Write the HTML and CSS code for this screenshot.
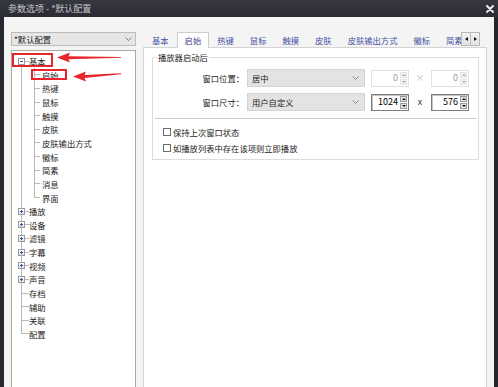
FILE: index.html
```html
<!DOCTYPE html>
<html lang="zh-CN">
<head>
<meta charset="utf-8">
<title>参数选项</title>
<link rel="stylesheet" href="styles.css">
</head>
<body>
<div class="win">
  <div class="titlebar">
    <span class="ttl">参数选项 - *默认配置</span>
    <svg class="close" width="8" height="8" viewBox="0 0 8 8"><path d="M1 1L7 7M7 1L1 7" stroke="#f2f2f2" stroke-width="1.8" stroke-linecap="round"/></svg>
  </div>
  <div class="body">
    <div class="left">
      <div class="combo main"><span>*默认配置</span><svg class="chev" width="7" height="4" viewBox="0 0 7 4"><polyline points="0.5,0.5 3.5,3.5 6.5,0.5" fill="none" stroke="#7a7a7a" stroke-width="1"/></svg></div>
      <div class="tree">
        <div class="node"><span class="g first"><span class="box"></span></span><span class="t">基本</span></div>
        <div class="node"><span class="g v"></span><span class="g2 tee"></span><span class="t">启始</span></div>
        <div class="node"><span class="g v"></span><span class="g2 tee"></span><span class="t">热键</span></div>
        <div class="node"><span class="g v"></span><span class="g2 tee"></span><span class="t">鼠标</span></div>
        <div class="node"><span class="g v"></span><span class="g2 tee"></span><span class="t">触摸</span></div>
        <div class="node"><span class="g v"></span><span class="g2 tee"></span><span class="t">皮肤</span></div>
        <div class="node"><span class="g v"></span><span class="g2 tee"></span><span class="t">皮肤输出方式</span></div>
        <div class="node"><span class="g v"></span><span class="g2 tee"></span><span class="t">徽标</span></div>
        <div class="node"><span class="g v"></span><span class="g2 tee"></span><span class="t">简素</span></div>
        <div class="node"><span class="g v"></span><span class="g2 tee"></span><span class="t">消息</span></div>
        <div class="node"><span class="g v"></span><span class="g2 last"></span><span class="t">界面</span></div>
        <div class="node"><span class="g tee"><span class="box plus"></span></span><span class="t">播放</span></div>
        <div class="node"><span class="g tee"><span class="box plus"></span></span><span class="t">设备</span></div>
        <div class="node"><span class="g tee"><span class="box plus"></span></span><span class="t">滤镜</span></div>
        <div class="node"><span class="g tee"><span class="box plus"></span></span><span class="t">字幕</span></div>
        <div class="node"><span class="g tee"><span class="box plus"></span></span><span class="t">视频</span></div>
        <div class="node"><span class="g tee"><span class="box plus"></span></span><span class="t">声音</span></div>
        <div class="node"><span class="g tee"></span><span class="t">存档</span></div>
        <div class="node"><span class="g tee"></span><span class="t">辅助</span></div>
        <div class="node"><span class="g tee"></span><span class="t">关联</span></div>
        <div class="node"><span class="g last"></span><span class="t">配置</span></div>
      </div>
    </div>
    <div class="right">
      <div class="tabbar">
        <div class="tabs">
          <span class="tab">基本</span>
          <span class="tab sel">启始</span>
          <span class="tab">热键</span>
          <span class="tab">鼠标</span>
          <span class="tab">触摸</span>
          <span class="tab">皮肤</span>
          <span class="tab">皮肤输出方式</span>
          <span class="tab">徽标</span>
          <span class="tab">简素</span>
        </div>
        <div class="scroll">
          <span class="sb"><i class="tri tl"></i></span>
          <span class="sb"><i class="tri tr"></i></span>
        </div>
      </div>
      <div class="panel">
        <fieldset class="grp">
          <legend>播放器启动后</legend>
          <div class="frow">
            <span class="lab">窗口位置：</span>
            <div class="combo f"><span>居中</span><svg class="chev" width="7" height="4" viewBox="0 0 7 4"><polyline points="0.5,0.5 3.5,3.5 6.5,0.5" fill="none" stroke="#8a8a8a" stroke-width="1"/></svg></div>
            <div class="spin dis first"><span class="val">0</span><span class="arr"><span class="ab"><i class="up"></i></span><span class="ab"><i class="dn"></i></span></span></div>
            <span class="times dis">×</span>
            <div class="spin dis"><span class="val">0</span><span class="arr"><span class="ab"><i class="up"></i></span><span class="ab"><i class="dn"></i></span></span></div>
          </div>
          <div class="frow">
            <span class="lab">窗口尺寸：</span>
            <div class="combo f"><span>用户自定义</span><svg class="chev" width="7" height="4" viewBox="0 0 7 4"><polyline points="0.5,0.5 3.5,3.5 6.5,0.5" fill="none" stroke="#8a8a8a" stroke-width="1"/></svg></div>
            <div class="spin en first"><span class="val">1024</span><span class="arr"><span class="ab"><i class="up"></i></span><span class="ab"><i class="dn"></i></span></span></div>
            <span class="times">x</span>
            <div class="spin en"><span class="val">576</span><span class="arr"><span class="ab"><i class="up"></i></span><span class="ab"><i class="dn"></i></span></span></div>
          </div>
          <div class="sep"></div>
          <label class="chk first"><span class="cb"></span>保持上次窗口状态</label>
          <label class="chk"><span class="cb"></span>如播放列表中存在该项则立即播放</label>
        </fieldset>
      </div>
    </div>
  </div>
  <svg class="annot" width="498" height="387" viewBox="0 0 498 387">
    <rect x="13" y="54" width="39" height="12" fill="none" stroke="#e6262b" stroke-width="2"/>
    <rect x="32" y="70" width="34" height="9" fill="none" stroke="#e6262b" stroke-width="2"/>
    <polygon points="57,57.5 70,52.5 68.5,56.2 121,57 121,57.8 68.5,59.2 70,62.5" fill="#e6262b"/>
    <polygon points="73,76.5 86,71.5 84.5,75 121,73.3 121,74.2 84.5,78 86,81.5" fill="#e6262b"/>
  </svg>
</div>
</body>
</html>
```

FILE: styles.css
```css
* { box-sizing: border-box; }
html, body { margin: 0; padding: 0; }
body {
  width: 498px;
  height: 387px;
  overflow: hidden;
  background: #25262e;
  font-family: "Noto Sans CJK SC", "Noto Sans", sans-serif;
  font-size: 8.3px;
  color: #222;
}
.win {
  position: relative;
  width: 498px;
  height: 387px;
  display: flex;
  flex-direction: column;
}
.titlebar {
  height: 17px;
  flex: none;
  display: flex;
  align-items: center;
  justify-content: space-between;
  padding: 0 4px 0 8px;
  background: linear-gradient(#363741, #2a2b33);
  color: #c4c4ca;
  font-size: 9px;
  line-height: 17px;
}
.close { display: block; }
.body {
  flex: 1;
  margin: 0 4px;
  background: #f4f4f4;
  display: flex;
  overflow: hidden;
}
.left {
  width: 132px;
  flex: none;
  padding: 15px 0 0 7px;
  display: flex;
  flex-direction: column;
  gap: 4px;
}
.combo {
  display: flex;
  align-items: center;
  justify-content: space-between;
  line-height: 12px;
}
.combo.main {
  height: 14px;
  flex: none;
  border: 1px solid #bcbcbc;
  background: #e6e6e6;
  padding: 0 3px 0 2px;
}
.chev { display: block; flex: none; }
.tree {
  height: 340px;
  flex: none;
  border: 1px solid #a9a9a9;
  background: #fff;
  padding: 3.3px 0 0 6px;
}
.node {
  height: 13.65px;
  display: flex;
  align-items: center;
  line-height: 12px;
}
.t { white-space: nowrap; color: #1e1e1e; }
.g, .g2 {
  height: 100%;
  flex: none;
  display: flex;
  align-items: center;
  background-repeat: no-repeat;
}
.g { width: 11px; }
.g2 { width: 13px; }
.g.v { background-image: linear-gradient(#b9b9b9, #b9b9b9); background-position: 3px 0; background-size: 1px 100%; }
.g.tee {
  background-image: linear-gradient(#b9b9b9, #b9b9b9), linear-gradient(#b9b9b9, #b9b9b9);
  background-position: 3px 0, 3px 50%;
  background-size: 1px 100%, 8px 1px;
}
.g.first {
  background-image: linear-gradient(#b9b9b9, #b9b9b9), linear-gradient(#b9b9b9, #b9b9b9);
  background-position: 3px 100%, 3px 50%;
  background-size: 1px 50%, 8px 1px;
}
.g.last {
  background-image: linear-gradient(#b9b9b9, #b9b9b9), linear-gradient(#b9b9b9, #b9b9b9);
  background-position: 3px 0, 3px 50%;
  background-size: 1px 50%, 8px 1px;
}
.g2.tee {
  background-image: linear-gradient(#b9b9b9, #b9b9b9), linear-gradient(#b9b9b9, #b9b9b9);
  background-position: 5px 0, 5px 50%;
  background-size: 1px 100%, 6px 1px;
}
.g2.last {
  background-image: linear-gradient(#b9b9b9, #b9b9b9), linear-gradient(#b9b9b9, #b9b9b9);
  background-position: 5px 0, 5px 50%;
  background-size: 1px 50%, 6px 1px;
}
.box {
  width: 7px;
  height: 7px;
  border: 1px solid #9a9a9a;
  background: linear-gradient(#3d5a96, #3d5a96) center / 3px 1px no-repeat, #fff;
}
.box.plus {
  background: linear-gradient(#3d5a96, #3d5a96) center / 3px 1px no-repeat,
              linear-gradient(#3d5a96, #3d5a96) center / 1px 3px no-repeat,
              linear-gradient(#ffffff, #d8e0ee);
}
.right {
  width: 344px;
  flex: none;
  margin-left: 7px;
  padding-top: 15px;
  display: flex;
  flex-direction: column;
}
.tabbar {
  display: flex;
  height: 16px;
  flex: none;
  margin-bottom: -1px;
}
.tabs {
  width: 318px;
  flex: none;
  display: flex;
  overflow: hidden;
  padding-left: 1px;
}
.tab {
  flex: none;
  height: 16px;
  padding: 0 7px;
  line-height: 14px;
  color: #4453a4;
  border: 1px solid transparent;
  border-bottom: none;
  white-space: nowrap;
}
.tab.sel {
  position: relative;
  z-index: 1;
  background: #fff;
  border-color: #cdcdcd;
  color: #38428c;
}
.scroll { display: flex; height: 14px; }
.sb {
  width: 10px;
  height: 14px;
  border: 1px solid #b9b9b9;
  background: linear-gradient(#f4f4f4, #e2e2e2);
  display: flex;
  align-items: center;
  justify-content: center;
}
.sb + .sb { margin-left: -1px; }
.tri { display: block; width: 0; height: 0; border-top: 2.5px solid transparent; border-bottom: 2.5px solid transparent; }
.tri.tl { border-right: 3px solid #111; }
.tri.tr { border-left: 3px solid #111; }
.panel {
  height: 345px;
  flex: none;
  border: 1px solid #d3d3d3;
  background: #fff;
  padding: 4px 8px 0 8px;
}
.grp {
  margin: 0;
  padding: 0 0 3px 0;
  width: 327px;
  min-width: 0;
  border: 1px solid #dcdcdc;
}
.grp legend {
  margin-left: 4px;
  padding: 0 1px;
  height: 10px;
  line-height: 10px;
  color: #222;
}
.frow {
  display: flex;
  align-items: center;
  height: 18px;
  margin-top: 7px;
}
.frow + .frow { margin-top: 6px; }
.lab {
  width: 91px;
  margin-right: 3px;
  text-align: right;
  white-space: nowrap;
  line-height: 12px;
}
.combo.f {
  width: 118px;
  height: 18px;
  flex: none;
  background: #e3e3e3;
  border: 1px solid #d4d4d4;
  padding: 0 5px 0 4px;
}
.spin {
  width: 38px;
  height: 17px;
  flex: none;
  display: flex;
  align-items: stretch;
  justify-content: flex-end;
  background: #fff;
  font-size: 9px;
}
.spin.first { margin-left: 6px; }
.spin.dis { border: 1px solid #e1e1e1; color: #9c9c9c; }
.spin.en { border: 1px solid #7c7c7c; box-shadow: inset 1px 1px 0 #c4c4c4; color: #000; }
.val { align-self: center; padding-right: 2px; line-height: 12px; }
.arr {
  width: 8px;
  display: flex;
  flex-direction: column;
  gap: 1px;
  padding: 1px 1px 1px 0;
}
.ab {
  flex: 1;
  display: flex;
  align-items: center;
  justify-content: center;
}
.spin.dis .ab { background: #f3f3f3; border: 1px solid #e4e4e4; }
.spin.en .ab { background: #e4e4e4; border: 1px solid #9a9a9a; }
.up, .dn { display: block; width: 0; height: 0; border-left: 2px solid transparent; border-right: 2px solid transparent; }
.up { border-bottom: 2px solid currentColor; }
.dn { border-top: 2px solid currentColor; }
.spin.dis .up, .spin.dis .dn { color: #a8a8a8; }
.spin.en .up, .spin.en .dn { color: #111; }
.times {
  width: 22px;
  flex: none;
  text-align: center;
  font-size: 9px;
  color: #333;
  line-height: 12px;
}
.times.dis { color: #c2c2c2; }
.sep {
  margin: 7px 2px 0;
  border-top: 1px solid #c9c9c9;
  border-bottom: 1px solid #fff;
}
.chk {
  display: flex;
  align-items: center;
  height: 16px;
  padding-left: 10px;
  line-height: 12px;
  white-space: nowrap;
}
.chk.first { margin-top: 4px; }
.cb {
  width: 8px;
  height: 8px;
  flex: none;
  border: 1px solid #6e6e6e;
  background: #fff;
  margin-right: 2px;
}
.annot {
  position: absolute;
  left: 0;
  top: 0;
  pointer-events: none;
}
```
